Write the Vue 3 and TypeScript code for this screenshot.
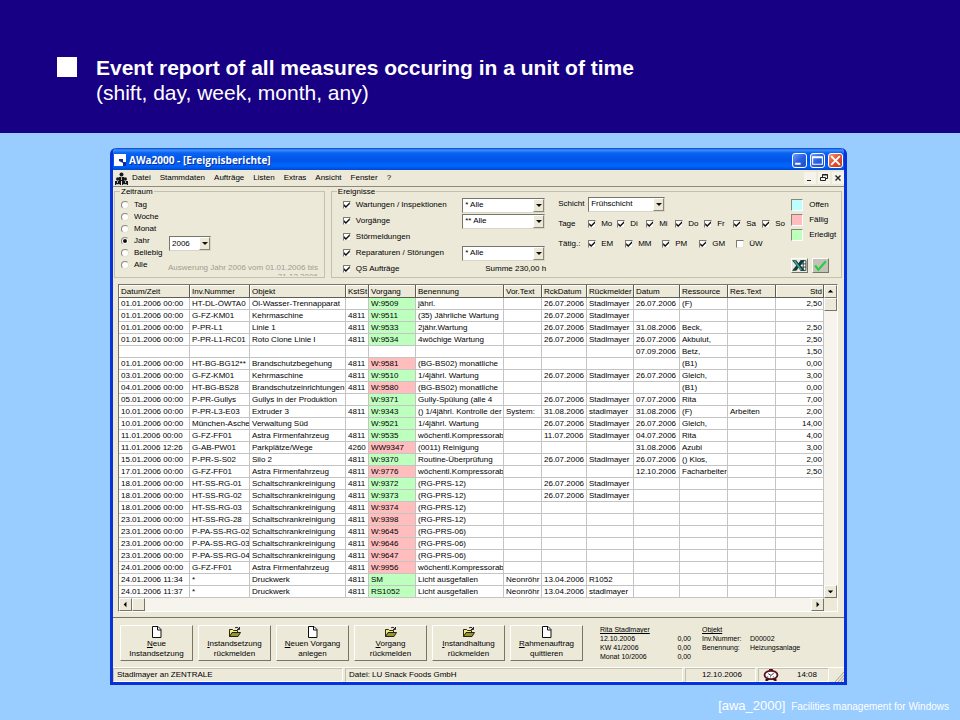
<script setup lang="ts">
import { ref } from 'vue'

interface Row {
  date: string
  inv: string
  object: string
  cost: string
  job: string
  state: 'done' | 'due' | ''
  label: string
  pre: string
  backDate: string
  backBy: string
  day: string
  resource: string
  text: string
  hours: string
}

const menus = ['Datei', 'Stammdaten', 'Aufträge', 'Listen', 'Extras', 'Ansicht', 'Fenster', '?']

const periods = ['Tag', 'Woche', 'Monat', 'Jahr', 'Beliebig', 'Alle']
const period = ref('Jahr')
const year = ref('2006')

const events = ref([
  { name: 'Wartungen / Inspektionen', on: true, filter: '* Alle' },
  { name: 'Vorgänge', on: true, filter: '** Alle' },
  { name: 'Störmeldungen', on: true, filter: '' },
  { name: 'Reparaturen / Störungen', on: true, filter: '* Alle' },
  { name: 'QS Aufträge', on: true, filter: '' },
])

const days = ref(['Mo', 'Di', 'Mi', 'Do', 'Fr', 'Sa', 'So'].map((name) => ({ name, on: true })))
const kinds = ref(['EM', 'MM', 'PM', 'GM', 'ÜW'].map((name) => ({ name, on: name !== 'ÜW' })))

const legend = [
  { name: 'Offen', tone: 'open' },
  { name: 'Fällig', tone: 'due' },
  { name: 'Erledigt', tone: 'done' },
]

const columns = [
  'Datum/Zeit', 'Inv.Nummer', 'Objekt', 'KstSt', 'Vorgang', 'Benennung', 'Vor.Text',
  'RckDatum', 'Rückmelder', 'Datum', 'Ressource', 'Res.Text', 'Std',
]

const source = `01.01.2006 00:00|HT-DL-ÖWTA0|Öl-Wasser-Trennapparat||W:9509|done|jährl.||26.07.2006|Stadlmayer|26.07.2006|(F)||2,50
01.01.2006 00:00|G-FZ-KM01|Kehrmaschine|4811|W:9511|done|(35) Jährliche Wartung||26.07.2006|Stadlmayer||||
01.01.2006 00:00|P-PR-L1|Linie 1|4811|W:9533|done|2jähr.Wartung||26.07.2006|Stadlmayer|31.08.2006|Beck,||2,50
01.01.2006 00:00|P-PR-L1-RC01|Roto Clone Linie I|4811|W:9534|done|4wöchige Wartung||26.07.2006|Stadlmayer|26.07.2006|Akbulut,||2,50
||||||||||07.09.2006|Betz,||1,50
01.01.2006 00:00|HT-BG-BG12**|Brandschutzbegehung|4811|W:9581|due|(BG-BS02) monatliche|||||(B1)||0,00
03.01.2006 00:00|G-FZ-KM01|Kehrmaschine|4811|W:9510|done|1/4jährl. Wartung||26.07.2006|Stadlmayer|26.07.2006|Gleich,||3,00
04.01.2006 00:00|HT-BG-BS28|Brandschutzeinrichtungen|4811|W:9580|due|(BG-BS02) monatliche|||||(B1)||0,00
05.01.2006 00:00|P-PR-Gullys|Gullys in der Produktion||W:9371|done|Gully-Spülung (alle 4||26.07.2006|Stadlmayer|07.07.2006|Rita||7,00
10.01.2006 00:00|P-PR-L3-E03|Extruder 3|4811|W:9343|done|() 1/4jährl. Kontrolle der|System:|31.08.2006|stadlmayer|31.08.2006|(F)|Arbeiten|2,00
10.01.2006 00:00|München-Asche|Verwaltung Süd||W:9521|done|1/4jährl. Wartung||26.07.2006|Stadlmayer|26.07.2006|Gleich,||14,00
11.01.2006 00:00|G-FZ-FF01|Astra Firmenfahrzeug|4811|W:9535|done|wöchentl.Kompressorab||11.07.2006|Stadlmayer|04.07.2006|Rita||4,00
11.01.2006 12:26|G-AB-PW01|Parkplätze/Wege|4260|WW9347|due|(0011) Reinigung||||31.08.2006|Azubi||3,00
15.01.2006 00:00|P-PR-S-S02|Silo 2|4811|W:9370|done|Routine-Überprüfung||26.07.2006|Stadlmayer|26.07.2006|() Klos,||2,00
17.01.2006 00:00|G-FZ-FF01|Astra Firmenfahrzeug|4811|W:9776|due|wöchentl.Kompressorab||||12.10.2006|Facharbeiter||2,50
18.01.2006 00:00|HT-SS-RG-01|Schaltschrankreinigung|4811|W:9372|done|(RG-PRS-12)||26.07.2006|Stadlmayer||||
18.01.2006 00:00|HT-SS-RG-02|Schaltschrankreinigung|4811|W:9373|done|(RG-PRS-12)||26.07.2006|Stadlmayer||||
18.01.2006 00:00|HT-SS-RG-03|Schaltschrankreinigung|4811|W:9374|due|(RG-PRS-12)|||||||
23.01.2006 00:00|HT-SS-RG-28|Schaltschrankreinigung|4811|W:9398|due|(RG-PRS-12)|||||||
23.01.2006 00:00|P-PA-SS-RG-02|Schaltschrankreinigung|4811|W:9645|due|(RG-PRS-06)|||||||
23.01.2006 00:00|P-PA-SS-RG-03|Schaltschrankreinigung|4811|W:9646|due|(RG-PRS-06)|||||||
23.01.2006 00:00|P-PA-SS-RG-04|Schaltschrankreinigung|4811|W:9647|due|(RG-PRS-06)|||||||
24.01.2006 00:00|G-FZ-FF01|Astra Firmenfahrzeug|4811|W:9956|due|wöchentl.Kompressorab|||||||
24.01.2006 11:34|*|Druckwerk|4811|SM|done|Licht ausgefallen|Neonröhr|13.04.2006|R1052||||
24.01.2006 11:37|*|Druckwerk|4811|RS1052|done|Licht ausgefallen|Neonröhr|13.04.2006|stadlmayer||||`

const rows: Row[] = source.split('\n').map((line) => {
  const c = line.split('|')
  return {
    date: c[0], inv: c[1], object: c[2], cost: c[3], job: c[4], state: c[5] as Row['state'],
    label: c[6], pre: c[7], backDate: c[8], backBy: c[9], day: c[10], resource: c[11],
    text: c[12], hours: c[13],
  }
})

const actions = [
  { key: 'N', rest: 'eue', second: 'Instandsetzung', icon: 'page' },
  { key: 'I', rest: 'nstandsetzung', second: 'rückmelden', icon: 'folder' },
  { key: 'N', rest: 'euen Vorgang', second: 'anlegen', icon: 'page' },
  { key: 'V', rest: 'organg', second: 'rückmelden', icon: 'folder' },
  { key: 'I', rest: 'nstandhaltung', second: 'rückmelden', icon: 'folder' },
  { key: 'R', rest: 'ahmenauftrag', second: 'quittieren', icon: 'page' },
]

const totals = [
  ['12.10.2006', '0,00'],
  ['KW 41/2006', '0,00'],
  ['Monat 10/2006', '0,00'],
]
</script>

<template>
  <div class="slide">
    <header class="banner">
      <span class="bullet"></span>
      <h1>Event report of all measures occuring in a unit of time<small>(shift, day, week, month, any)</small></h1>
    </header>

    <main class="stage">
      <section class="window">
        <div class="titlebar">
          <svg class="app-icon" viewBox="0 0 12 12"><path fill="#fff" d="M0 0h12v12H0z" /><path fill="#112a9c" d="M5 5h4v3h3v4H9V9L5 7z" /></svg>
          <span class="caption">AWa2000 - [Ereignisberichte]</span>
          <button class="cap" type="button" aria-label="Minimieren"><svg viewBox="0 0 12 12"><path fill="#fff" d="M2 8h5v2H2z" /></svg></button>
          <button class="cap" type="button" aria-label="Maximieren"><svg viewBox="0 0 12 12"><path fill="none" stroke="#fff" d="M1.500 2.500h9v7h-9z M2 3.500h8" /></svg></button>
          <button class="cap close" type="button" aria-label="Schließen"><svg viewBox="0 0 12 12"><path stroke="#fff" stroke-width="1.800" d="M2 2l8 8M10 2l-8 8" /></svg></button>
        </div>

        <nav class="menubar">
          <svg class="doc-icon" viewBox="0 0 13 13">
            <g fill="#16181c"><circle cx="6.500" cy="2.500" r="2" /><path d="M4 5h5v4H4z" /><circle cx="2.800" cy="7" r="1.800" /><circle cx="10.200" cy="7" r="1.800" /><path d="M0 9h6v4H0zM7 9h6v4H7z" /></g>
            <path fill="#aeb6c4" d="M6 5h1v3H6zM2 9h1v2H2zM10 9h1v2h-1zM1 12h4v1H1zM8 12h4v1H8z" />
          </svg>
          <button v-for="m in menus" :key="m" type="button">{{ m }}</button>
          <span class="mdi">
            <button type="button" aria-label="Fenster minimieren"><svg viewBox="0 0 12 12"><path stroke="#222" d="M3 8.500h4" /></svg></button>
            <button type="button" aria-label="Fenster wiederherstellen"><svg viewBox="0 0 12 12"><path fill="none" stroke="#222" d="M4.500 5V2.500h5v4H8M2.500 5.500h5v3h-5z M4 3h6" /></svg></button>
            <button type="button" aria-label="Fenster schließen"><svg viewBox="0 0 12 12"><path stroke="#222" stroke-width="1.400" d="M3.500 3.500l5 5M8.500 3.500l-5 5" /></svg></button>
          </span>
        </nav>

        <div class="filters">
          <fieldset class="period">
            <legend>Zeitraum</legend>
            <div class="period-body">
              <div class="radios">
                <label v-for="p in periods" :key="p"><input v-model="period" type="radio" name="period" :value="p" />{{ p }}</label>
              </div>
              <div class="period-side">
                <span class="combo year">
                  <select v-model="year" aria-label="Jahr"><option>2006</option></select>
                  <i class="drop"></i>
                </span>
                <p class="hint">Auswerung Jahr 2006 vom 01.01.2006 bis<br /><span>31.12.2006</span></p>
              </div>
            </div>
          </fieldset>

          <fieldset class="events">
            <legend>Ereignisse</legend>
            <div class="events-body">
              <div class="kinds">
                <div v-for="(e, i) in events" :key="e.name" class="kind">
                  <label><input v-model="e.on" type="checkbox" />{{ e.name }}</label>
                  <span v-if="e.filter" class="combo">
                    <select v-model="e.filter" :aria-label="e.name"><option>{{ e.filter }}</option></select>
                    <i class="drop"></i>
                  </span>
                  <span v-else-if="i === 4" class="sum">Summe 230,00 h</span>
                </div>
              </div>

              <div class="shift">
                <div class="line">
                  <label class="name" for="shift">Schicht</label>
                  <span class="combo">
                    <select id="shift"><option>Frühschicht</option></select>
                    <i class="drop"></i>
                  </span>
                </div>
                <div class="line">
                  <span class="name">Tage</span>
                  <label v-for="d in days" :key="d.name" class="day"><input v-model="d.on" type="checkbox" />{{ d.name }}</label>
                </div>
                <div class="line">
                  <span class="name">Tätig.:</span>
                  <label v-for="k in kinds" :key="k.name" class="sort"><input v-model="k.on" type="checkbox" />{{ k.name }}</label>
                </div>
              </div>

              <div class="side">
                <ul>
                  <li v-for="l in legend" :key="l.name"><i :class="l.tone"></i>{{ l.name }}</li>
                </ul>
                <div class="tools">
                  <button type="button" aria-label="Excel">
                    <svg viewBox="0 0 14 12"><path fill="#fff" d="M7 1h6v10H7z" /><path stroke="#1d3434" stroke-width=".8" fill="none" d="M8 1.500h5v9H8M8 4.500h5M8 7.500h5M10.500 2v8" /><path fill="#123a3a" d="M0 1h4l2 3 2-3h4L8 6l4 5H8L6 8l-2 3H0l4-5z" /><path fill="#3fa39c" d="M1.500 1.800h2l6 8.400h-2z" /></svg>
                  </button>
                  <button type="button" class="ok" aria-label="Übernehmen">
                    <svg viewBox="0 0 14 12"><path fill="none" stroke="#25d03c" stroke-width="2" d="M2 6l3 4 7-8" /></svg>
                  </button>
                </div>
              </div>
            </div>
          </fieldset>
        </div>

        <div class="grid">
          <table>
            <colgroup>
              <col class="c-date" /><col class="c-inv" /><col class="c-object" /><col class="c-cost" /><col class="c-job" />
              <col class="c-label" /><col class="c-pre" /><col class="c-back" /><col class="c-by" /><col class="c-day" />
              <col class="c-res" /><col class="c-text" /><col class="c-hours" />
            </colgroup>
            <thead>
              <tr><th v-for="c in columns" :key="c" scope="col">{{ c }}</th></tr>
            </thead>
            <tbody>
              <tr v-for="(r, i) in rows" :key="i">
                <td>{{ r.date }}</td><td>{{ r.inv }}</td><td>{{ r.object }}</td><td>{{ r.cost }}</td>
                <td :class="r.state">{{ r.job }}</td><td>{{ r.label }}</td><td>{{ r.pre }}</td><td>{{ r.backDate }}</td>
                <td>{{ r.backBy }}</td><td>{{ r.day }}</td><td>{{ r.resource }}</td><td>{{ r.text }}</td><td>{{ r.hours }}</td>
              </tr>
            </tbody>
          </table>
          <div class="scroll vertical">
            <button type="button" aria-label="Nach oben"><svg viewBox="0 0 12 12"><path d="M3 7h6L6 4z" /></svg></button>
            <span class="thumb"></span>
            <button class="end" type="button" aria-label="Nach unten"><svg viewBox="0 0 12 12"><path d="M3 5h6L6 8z" /></svg></button>
          </div>
          <div class="scroll horizontal">
            <button type="button" aria-label="Nach links"><svg viewBox="0 0 12 12"><path d="M7 3v6L4 6z" /></svg></button>
            <span class="thumb"></span>
            <button class="end" type="button" aria-label="Nach rechts"><svg viewBox="0 0 12 12"><path d="M5 3v6l3-3z" /></svg></button>
          </div>
          <span class="corner"></span>
        </div>

        <div class="actions">
          <button v-for="(a, i) in actions" :key="i" class="action" type="button">
            <svg v-if="a.icon === 'page'" viewBox="0 0 12 12"><path fill="#fff" stroke="#111" d="M1.500 .5h5.500l3 3v8H1.500z" /><path fill="none" stroke="#111" d="M6.500 .5v3.500h3.500" /></svg>
            <svg v-else viewBox="0 0 12 12"><path fill="#f2ee7a" stroke="#111" stroke-width=".9" d="M.5 10.500V3.500h3l1 1h4V6" /><path fill="#98942a" stroke="#111" stroke-width=".9" d="M.5 10.500L3 6.500h8.500L9 10.500z" /><path fill="none" stroke="#111" stroke-width=".9" d="M6 2c1-1 3-1 4 1M10.500 1v2.500H8" /></svg>
            <span><u>{{ a.key }}</u>{{ a.rest }}</span>
            <span>{{ a.second }}</span>
          </button>
          <dl class="totals">
            <div><dt class="head">Rita Stadlmayer</dt></div>
            <div v-for="t in totals" :key="t[0]"><dt>{{ t[0] }}</dt><dd>{{ t[1] }}</dd></div>
          </dl>
          <dl class="object">
            <div><dt class="head">Objekt</dt></div>
            <div><dt>Inv.Nummer:</dt><dd>D00002</dd></div>
            <div><dt>Benennung:</dt><dd>Heizungsanlage</dd></div>
          </dl>
        </div>

        <footer class="status">
          <span class="user">Stadlmayer an ZENTRALE</span>
          <span class="file">Datei: LU Snack Foods GmbH</span>
          <span class="date">12.10.2006</span>
          <span class="time">
            <svg viewBox="0 0 18 13"><path fill="#3a0d16" d="M7 0h4v3H7zM3 11l3-2 2 2-3 2H3zM15 11l-3-2-2 2 3 2h2z" /><ellipse cx="9" cy="6.500" rx="7" ry="4.500" fill="#fff" stroke="#5d1020" stroke-width="2" /><path fill="none" stroke="#222" d="M9 7l3-2.500M9 7L6 5" /><path stroke="#222" stroke-dasharray="1 2" d="M5 8.500h8" /></svg>
            14:08
          </span>
          <svg class="grip" viewBox="0 0 10 12"><path stroke="#a5a08c" d="M1 12l9-10M4 12l6-7M7 12l3-4" /></svg>
        </footer>
      </section>
    </main>

    <p class="credit"><span>[awa_2000]</span> Facilities management for Windows</p>
  </div>
</template>

<style>
body {
  background: #99ccff;
}
</style>

<style scoped>
* {
  box-sizing: border-box;
}
.slide {
  min-height: 100vh;
  display: flex;
  flex-direction: column;
  background: #99ccff;
  font-family: "Liberation Sans", sans-serif;
}
.banner {
  display: flex;
  gap: 19px;
  height: 133px;
  padding: 55px 57px 0;
  background: #180084;
  color: #fff;
}
.bullet {
  flex: none;
  width: 20px;
  height: 20px;
  margin-top: 2px;
  background: #fff;
}
h1 {
  margin: 0;
  font-size: 21px;
  line-height: 25px;
}
h1 small {
  display: block;
  font-size: 21px;
  font-weight: 400;
}
.stage {
  padding: 15px 113px 0 110px;
}
.window {
  border: 3px solid #0831d9;
  border-top: 0;
  border-radius: 6px 6px 0 0;
  overflow: hidden;
  background: #ece9d8;
  color: #000;
  font: 8px/12px "Liberation Sans", sans-serif;
}
button,
select {
  margin: 0;
  padding: 0;
  border: 0;
  background: none;
  color: inherit;
  font: inherit;
  white-space: nowrap;
}
svg {
  display: block;
}
.titlebar {
  display: flex;
  align-items: center;
  gap: 3px;
  height: 22px;
  margin: 0 -3px;
  padding: 2px 4px 0;
  background: linear-gradient(#0a3fc8 0, #3a93ff 2px, #0a62f0 5px, #0055ea 12px, #0066ff 18px, #0048d0 22px);
  color: #fff;
}
.app-icon {
  width: 12px;
  height: 12px;
}
.caption {
  flex: 1;
  font: bold 10px/14px "Open Sans", sans-serif;
  text-shadow: 1px 1px 0 #0a2f9c;
}
.cap {
  width: 15px;
  height: 15px;
  border: 1px solid #fff;
  border-radius: 3px;
  background: linear-gradient(135deg, #6f9cff, #2a5fe0 50%, #1c4fd0);
}
.cap.close {
  background: linear-gradient(135deg, #f09a80, #e0502c 50%, #c83c18);
}
.cap svg {
  width: 13px;
  height: 13px;
}
.menubar {
  display: flex;
  align-items: center;
  gap: 9px;
  height: 17px;
  padding-left: 2px;
  border-bottom: 1px solid #8d8a7c;
}
.doc-icon {
  width: 13px;
  height: 13px;
  margin-right: -5px;
}
.mdi {
  display: flex;
  gap: 2px;
  margin-left: auto;
}
.mdi button {
  width: 12px;
  height: 12px;
  background: #f5f3ea;
}
.filters {
  display: flex;
  gap: 6px;
  padding: 0 2px 0 1px;
}
fieldset {
  min-width: 0;
  height: 91px;
  margin: 0;
  padding: 0;
  border: 1px solid #c3c0b0;
}
legend {
  margin-left: 5px;
  padding: 0 1px;
  line-height: 9px;
}
.period {
  flex: 210 1 0;
}
.events {
  flex: 512 1 0;
}
.period-body {
  display: flex;
  height: 80px;
  padding: 3px 0 0 6px;
  overflow: hidden;
}
.radios {
  width: 42px;
}
label {
  display: flex;
  align-items: center;
  white-space: nowrap;
}
input {
  flex: none;
  appearance: none;
  display: grid;
  place-items: center;
  margin: 0;
  background: #fff;
}
input[type='radio'] {
  width: 8px;
  height: 8px;
  margin-right: 5px;
  border: 1px solid;
  border-color: #8a877a #e4e1d2 #e4e1d2 #8a877a;
  border-radius: 50%;
}
input[type='radio']:checked::before {
  content: '';
  width: 4px;
  height: 4px;
  border-radius: 50%;
  background: #111;
}
input[type='checkbox'] {
  width: 8px;
  height: 8px;
  border: 1px solid;
  border-color: #7d7a6d #e9e6d8 #e9e6d8 #7d7a6d;
}
input[type='checkbox']:checked::before {
  content: '';
  width: 6px;
  height: 6px;
  background: #111;
  clip-path: polygon(0 35%, 35% 65%, 100% 0, 100% 35%, 35% 100%, 0 70%);
}
.period-side {
  padding-top: 37px;
  white-space: nowrap;
}
.combo {
  display: grid;
  grid-template-columns: 1fr 11px;
  height: 15px;
  border: 1px solid;
  border-color: #77746a #d8d5c6 #d8d5c6 #77746a;
  background: #fff;
}
.combo select {
  grid-area: 1 / 1 / 2 / 3;
  min-width: 0;
  appearance: none;
  padding-left: 2px;
  line-height: 12px;
}
.drop {
  grid-area: 1 / 2;
  display: grid;
  place-items: center;
  border: 1px solid;
  border-color: #fff #8a877a #8a877a #fff;
  background: #ece9d8;
  pointer-events: none;
}
.drop::before {
  content: '';
  border: 3px solid transparent;
  border-top-color: #111;
  border-bottom: 0;
}
.year {
  width: 42px;
  margin-left: 6px;
}
.hint {
  margin: 12px 0 0 5px;
  color: #a09d90;
  line-height: 9px;
}
.hint span {
  display: block;
  text-align: right;
}
.events-body {
  display: flex;
  padding: 1px 0 0 11px;
}
.kinds {
  flex: 216 1 0;
}
.kind {
  display: flex;
  align-items: center;
  justify-content: space-between;
  height: 16px;
}
.kind input {
  margin-right: 5px;
}
.kind .combo {
  width: 83px;
  margin-right: 13px;
}
.sum {
  margin-right: 12px;
}
.shift {
  flex: 233 1 0;
}
.line {
  display: flex;
  align-items: center;
  height: 14px;
  margin-bottom: 6px;
}
.line .name {
  width: 30px;
}
.line .combo {
  width: 77px;
}
.day {
  width: 29px;
}
.sort {
  width: 37px;
}
.day input,
.sort input {
  margin-right: 5px;
}
.side {
  flex: 50 1 0;
}
ul {
  margin: 0;
  padding: 0;
  list-style: none;
}
li {
  display: flex;
  align-items: center;
  gap: 6px;
  height: 15px;
}
li i {
  width: 12px;
  height: 12px;
  border: 1px solid;
  border-color: #8a877a #fff #fff #8a877a;
}
.open {
  background: #bff;
}
.due {
  background: #ffbdbd;
}
.done {
  background: #bdffbd;
}
.tools {
  display: flex;
  gap: 4px;
  padding-top: 16px;
}
.tools button {
  width: 17px;
  height: 15px;
  border: 1px solid;
  border-color: #fff #77746a #77746a #fff;
}
.tools .ok {
  background: #c4c2b8;
}
.tools svg {
  width: 15px;
  height: 13px;
}
.grid {
  display: grid;
  grid-template-columns: 1fr 13px;
  margin: 6px 6px 0 5px;
  border: 1px solid;
  border-color: #77746a #fff #fff #77746a;
  background: #f6f4ec;
}
table {
  width: 100%;
  table-layout: fixed;
  border-collapse: separate;
  border-spacing: 0;
  background: #fff;
}
.c-date { width: 71px; }
.c-inv { width: 60px; }
.c-object { width: 96px; }
.c-cost { width: 23px; }
.c-job { width: 47px; }
.c-label { width: 88px; }
.c-pre { width: 38px; }
.c-back { width: 45px; }
.c-by { width: 47px; }
.c-day { width: 46px; }
.c-res { width: 48px; }
.c-text { width: 48px; }
.c-hours { width: 48px; }
th,
td {
  height: 12px;
  padding: 0 0 0 2px;
  border: solid #c4c4c4;
  border-width: 0 1px 1px 0;
  font-weight: 400;
  line-height: 11px;
  text-align: left;
  white-space: nowrap;
  overflow: hidden;
}
th {
  height: 13px;
  border-color: #5f5d52;
  background: #ece9d8;
  box-shadow: inset 1px 1px 0 #fff;
}
th:last-child,
td:last-child {
  padding-right: 1px;
  text-align: right;
}
.scroll {
  display: flex;
}
.vertical {
  flex-direction: column;
}
.scroll button,
.thumb {
  width: 13px;
  height: 13px;
  border: 1px solid;
  border-color: #fff #77746a #77746a #fff;
  background: #ece9d8;
}
.scroll svg {
  width: 11px;
  height: 11px;
}
.scroll .end {
  margin-left: auto;
}
.vertical .end {
  margin: auto 0 0;
}
.corner {
  background: #ece9d8;
}
.actions {
  display: flex;
  gap: 5px;
  margin-top: 5px;
  padding: 7px 5px 6px 7px;
  border-top: 1px solid #77746a;
}
.action {
  flex: none;
  display: flex;
  flex-direction: column;
  align-items: center;
  width: 73px;
  height: 36px;
  border: 1px solid;
  border-color: #fff #77746a #77746a #fff;
  line-height: 10px;
}
.action svg {
  width: 12px;
  height: 12px;
  margin-bottom: 1px;
}
dl {
  margin: 0;
  font-size: 7px;
  line-height: 9px;
}
dl div {
  display: flex;
}
dd {
  margin: 0;
}
.head {
  text-decoration: underline;
}
.totals {
  flex: 0 0 91px;
  margin-left: 12px;
}
.totals div {
  justify-content: space-between;
}
.object {
  margin-left: 6px;
}
.object dt {
  width: 48px;
}
.status {
  display: flex;
  gap: 2px;
  height: 15px;
  border-top: 1px solid #fff;
}
.status span {
  padding-left: 3px;
  border: 1px solid;
  border-color: #c3c0b0 #fff #fff #c3c0b0;
  white-space: nowrap;
}
.status .user {
  flex: 1 1 230px;
}
.status .file {
  flex: 1 1 338px;
}
.status .date {
  flex: 0 0 71px;
  text-align: center;
}
.status .time {
  flex: 0 0 71px;
  display: flex;
  justify-content: space-between;
  padding-right: 11px;
}
.time svg {
  width: 18px;
  height: 12px;
}
.grip {
  width: 10px;
  height: 12px;
  margin: auto 0 0 3px;
}
.credit {
  margin: 13px 11px 0;
  color: #fff;
  font: 10px/16px "Liberation Sans", sans-serif;
  text-align: right;
}
.credit span {
  margin-right: 3px;
  font-size: 13px;
}
</style>
